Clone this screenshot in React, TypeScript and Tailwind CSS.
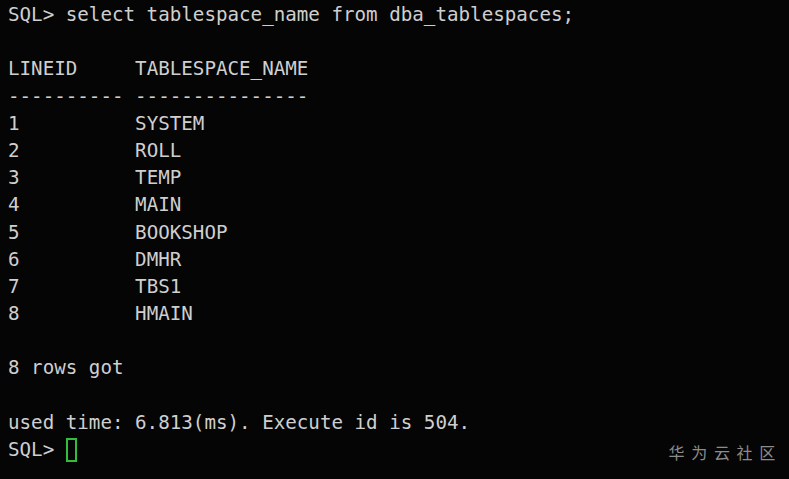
const rows = ['SYSTEM', 'ROLL', 'TEMP', 'MAIN', 'BOOKSHOP', 'DMHR', 'TBS1', 'HMAIN'];

function Line({ children }: { children?: React.ReactNode }) {
  return <div className="h-[27.2px] whitespace-pre">{children ?? ' '}</div>;
}

export default function App() {
  const pad = (s: string) => s.padEnd(11, ' ');
  return (
    <div
      className="relative w-[789px] h-[479px] overflow-hidden bg-[#050505] text-[#cfcfcf] pl-[8px] pt-[1px] text-[19.2px] leading-[27.2px]"
      style={{ fontFamily: '"DejaVu Sans Mono", "Liberation Mono", monospace' }}
    >
      <Line>SQL&gt; select tablespace_name from dba_tablespaces;</Line>
      <Line />
      <Line>{pad('LINEID')}TABLESPACE_NAME</Line>
      <Line>---------- ---------------</Line>
      {rows.map((r, i) => (
        <Line key={r}>
          {pad(String(i + 1))}
          {r}
        </Line>
      ))}
      <Line />
      <Line>8 rows got</Line>
      <Line />
      <Line>used time: 6.813(ms). Execute id is 504.</Line>
      <div className="h-[27.2px] flex items-center whitespace-pre">
        <span>SQL&gt; </span>
        <span className="inline-block w-[11px] h-[24px] border-2 border-[#2fbf3a]" />
      </div>
      <div
        className="absolute right-[7px] bottom-[13px] text-[16px] tracking-[6.7px] text-[#8c8c8c]"
        style={{ fontFamily: '"Noto Sans CJK SC", sans-serif' }}
      >
        华为云社区
      </div>
    </div>
  );
}
